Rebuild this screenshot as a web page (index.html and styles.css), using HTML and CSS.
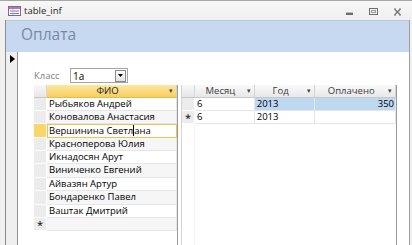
FILE: index.html
```html
<!DOCTYPE html>
<html lang="ru">
<head>
<meta charset="utf-8">
<link rel="stylesheet" href="styles.css">
</head>
<body>
<div class="win">
  <div class="titlebar">
    <svg class="appicon" width="13" height="10" viewBox="0 0 13 10">
      <rect x="0.5" y="0.5" width="12" height="9" fill="#fff" stroke="#9b5b8e"/>
      <rect x="1" y="1" width="11" height="2" fill="#b77aa8"/>
      <line x1="2" y1="5" x2="11" y2="5" stroke="#5b84c4"/>
      <line x1="2" y1="7.5" x2="11" y2="7.5" stroke="#5b84c4"/>
      <line x1="5" y1="3" x2="5" y2="9" stroke="#9fb6dc"/>
    </svg>
    <span class="title">table_inf</span>
    <div class="ctrls">
      <svg width="10" height="10" viewBox="0 0 10 10"><rect x="1" y="6" width="7" height="2" fill="#6d6d6d"/><rect x="1" y="5" width="7" height="1" fill="#bdbdbd"/></svg>
      <svg width="10" height="10" viewBox="0 0 10 10"><rect x="0.5" y="1.5" width="8" height="6" fill="none" stroke="#6d6d6d"/><rect x="2.5" y="3.5" width="4" height="2" fill="none" stroke="#9a9a9a"/></svg>
      <svg width="10" height="10" viewBox="0 0 10 10"><path d="M1.5 2 L7.5 8 M7.5 2 L1.5 8" stroke="#707070" stroke-width="1.3"/><path d="M1 1.5 L3 1.5 M6 1.5 L8 1.5 M1 8.5 L3 8.5 M6 8.5 L8 8.5" stroke="#b0b0b0"/></svg>
    </div>
  </div>
  <div class="frame">
    <div class="header">Оплата</div>
    <div class="main">
      <div class="recsel">
        <svg width="5" height="8" viewBox="0 0 5 8"><path d="M0 0 L5 4 L0 8 Z" fill="#000"/></svg>
      </div>
      <div class="detail">
        <div class="field">
          <span class="label">Класс</span>
          <div class="combo">
            <span class="combo-text">1а</span>
            <span class="combo-btn"><svg width="5" height="3" viewBox="0 0 5 3"><path d="M0 0 L5 0 L2.5 3 Z" fill="#000"/></svg></span>
          </div>
        </div>
        <div class="subforms">
          <div class="ds ds-left">
            <div class="row head">
              <div class="sel corner"></div>
              <div class="cell hcell fio active">ФИО<span class="arr">▾</span></div>
            </div>
            <div class="row"><div class="sel"></div><div class="cell fio">Рыбьяков Андрей</div></div>
            <div class="row alt"><div class="sel"></div><div class="cell fio">Коновалова Анастасия</div></div>
            <div class="row cur"><div class="sel"></div><div class="cell fio focus">Вершинина Светл<span class="caret"></span>ана</div></div>
            <div class="row alt"><div class="sel"></div><div class="cell fio">Красноперова Юлия</div></div>
            <div class="row"><div class="sel"></div><div class="cell fio">Икнадосян Арут</div></div>
            <div class="row alt"><div class="sel"></div><div class="cell fio">Виниченко Евгений</div></div>
            <div class="row"><div class="sel"></div><div class="cell fio">Айвазян Артур</div></div>
            <div class="row alt"><div class="sel"></div><div class="cell fio">Бондаренко Павел</div></div>
            <div class="row"><div class="sel"></div><div class="cell fio">Ваштак Дмитрий</div></div>
            <div class="row alt"><div class="sel star">*</div><div class="cell fio"></div></div>
          </div>
          <div class="ds ds-right">
            <div class="row head">
              <div class="sel corner"></div>
              <div class="cell hcell c-m">Месяц<span class="arr">▾</span></div>
              <div class="cell hcell c-y">Год<span class="arr">▾</span></div>
              <div class="cell hcell c-p">Оплачено<span class="arr">▾</span></div>
            </div>
            <div class="row"><div class="sel"></div><div class="cell c-m">6</div><div class="cell c-y hl">2013</div><div class="cell c-p hl num">350</div></div>
            <div class="row"><div class="sel star">*</div><div class="cell c-m">6</div><div class="cell c-y">2013</div><div class="cell c-p"></div></div>
            <div class="rest"><div class="sel-empty"></div></div>
          </div>
        </div>
      </div>
    </div>
  </div>
</div>
</body>
</html>
```

FILE: styles.css
```css
* { box-sizing: border-box; }
html, body { margin: 0; padding: 0; }
body {
  width: 412px;
  height: 245px;
  overflow: hidden;
  background: #fff;
  font-family: "Open Sans", "Noto Sans", sans-serif;
}
.win {
  width: 412px;
  height: 245px;
  display: flex;
  flex-direction: column;
  border-top: 1px solid #a9a9a9;
  background: #f0f0f0;
}
.titlebar {
  height: 19px;
  flex: none;
  display: flex;
  align-items: center;
  padding-left: 8px;
  background: linear-gradient(#f7f7f7, #efefef);
}
.appicon { flex: none; }
.title {
  margin-left: 3px;
  font-size: 9.5px;
  color: #1e1e1e;
  line-height: 1;
}
.ctrls {
  margin-left: auto;
  display: flex;
  gap: 14px;
  padding-right: 9px;
  padding-top: 2px;
}
.frame {
  flex: 1;
  margin-left: 5px;
  margin-right: 2px;
  border-left: 1px solid #8c8c8c;
  border-right: 1px solid #a0a0a0;
  display: flex;
  flex-direction: column;
  min-height: 0;
}
.header {
  height: 32px;
  flex: none;
  background: #c6d9f0;
  border-top: 1px solid #b8c8dc;
  padding-left: 15px;
  padding-top: 3px;
  font-size: 15.5px;
  color: #7b8a9e;
  line-height: 20px;
}
.main {
  flex: 1;
  display: flex;
  min-height: 0;
  background: #fff;
}
.recsel {
  width: 12px;
  flex: none;
  background: #efefef;
  border-right: 1px solid #8f8f8f;
  padding: 3px 0 0 4px;
}
.recsel svg { display: block; }
.detail {
  flex: 1;
  display: flex;
  flex-direction: column;
  padding: 16px 0 0 16px;
  min-width: 0;
}
.field {
  display: flex;
  align-items: center;
  height: 15px;
}
.label {
  width: 36px;
  font-size: 9.5px;
  color: #7f7f7f;
}
.combo {
  width: 58px;
  height: 15px;
  border: 1px solid #a5a5a5;
  display: flex;
  align-items: center;
  background: #fff;
}
.combo-text {
  flex: 1;
  font-size: 10px;
  padding-left: 2px;
  color: #000;
  line-height: 1;
}
.combo-btn {
  width: 11px;
  height: 12px;
  margin-right: 1px;
  border: 1px solid #8a8a8a;
  background: linear-gradient(#fdfdfd, #e4e4e4);
  display: flex;
  align-items: center;
  justify-content: center;
}
.combo-btn svg { display: block; }
.subforms {
  flex: 1;
  display: flex;
  margin-top: 2px;
  min-height: 0;
}
.ds {
  display: flex;
  flex-direction: column;
  font-size: 9.5px;
  color: #000;
}
.ds-left {
  width: 144px;
  border-right: 1px solid #9a9a9a;
}
.ds-right {
  width: 216px;
  margin-left: 3px;
  border-left: 1px solid #d4d4d4;
  border-right: 1px solid #9a9a9a;
}
.row {
  display: flex;
  height: 13.4px;
  flex: none;
}
.row.head { height: 12.5px; }
.sel {
  width: 13px;
  flex: none;
  background: #ececec;
  border-bottom: 1px solid #fff;
  border-right: 1px solid #fff;
  font-size: 11px;
  line-height: 13px;
  text-align: center;
  color: #000;
}
.sel.corner {
  background: linear-gradient(#f7f7f7, #e6e6e6);
  border-bottom: 1px solid #c8c8c8;
  border-right: 1px solid #d8d8d8;
}
.cur .sel { background: #f8d66c; }
.cell {
  border-bottom: 1px solid #e6e6e6;
  border-right: 1px solid #e6e6e6;
  padding: 0 2px;
  line-height: 12px;
  white-space: nowrap;
  overflow: hidden;
}
.alt .cell { background: #f6f6f6; }
.fio { width: 130px; }
.hcell {
  display: flex;
  justify-content: center;
  position: relative;
  background: linear-gradient(#f9f9f9, #e8e8e8);
  border-bottom: 1px solid #c8c8c8;
  border-right: 1px solid #d2d2d2;
  color: #3c3c3c;
  line-height: 12px;
  padding-right: 10px;
}
.hcell.active {
  background: linear-gradient(#fde7a0, #f7cf5e);
  border-bottom-color: #e7bb4a;
  color: #222;
}
.arr {
  position: absolute;
  right: 3px;
  top: 0;
  font-size: 7px;
  color: #444;
}
.focus {
  border: 1px solid #f2c14e;
  background: #fff;
  line-height: 11px;
  padding-left: 1px;
}
.caret {
  display: inline-block;
  width: 1px;
  height: 11px;
  background: #000;
  vertical-align: top;
}
.c-m { width: 60px; }
.c-y { width: 61px; }
.c-p { width: 81px; }
.hl { background: #bfd8f2; }
.num { text-align: right; padding-right: 1px; }
.rest {
  flex: 1;
  display: flex;
}
.sel-empty {
  width: 13px;
  border-right: 1px solid #f2f2f2;
}
```
